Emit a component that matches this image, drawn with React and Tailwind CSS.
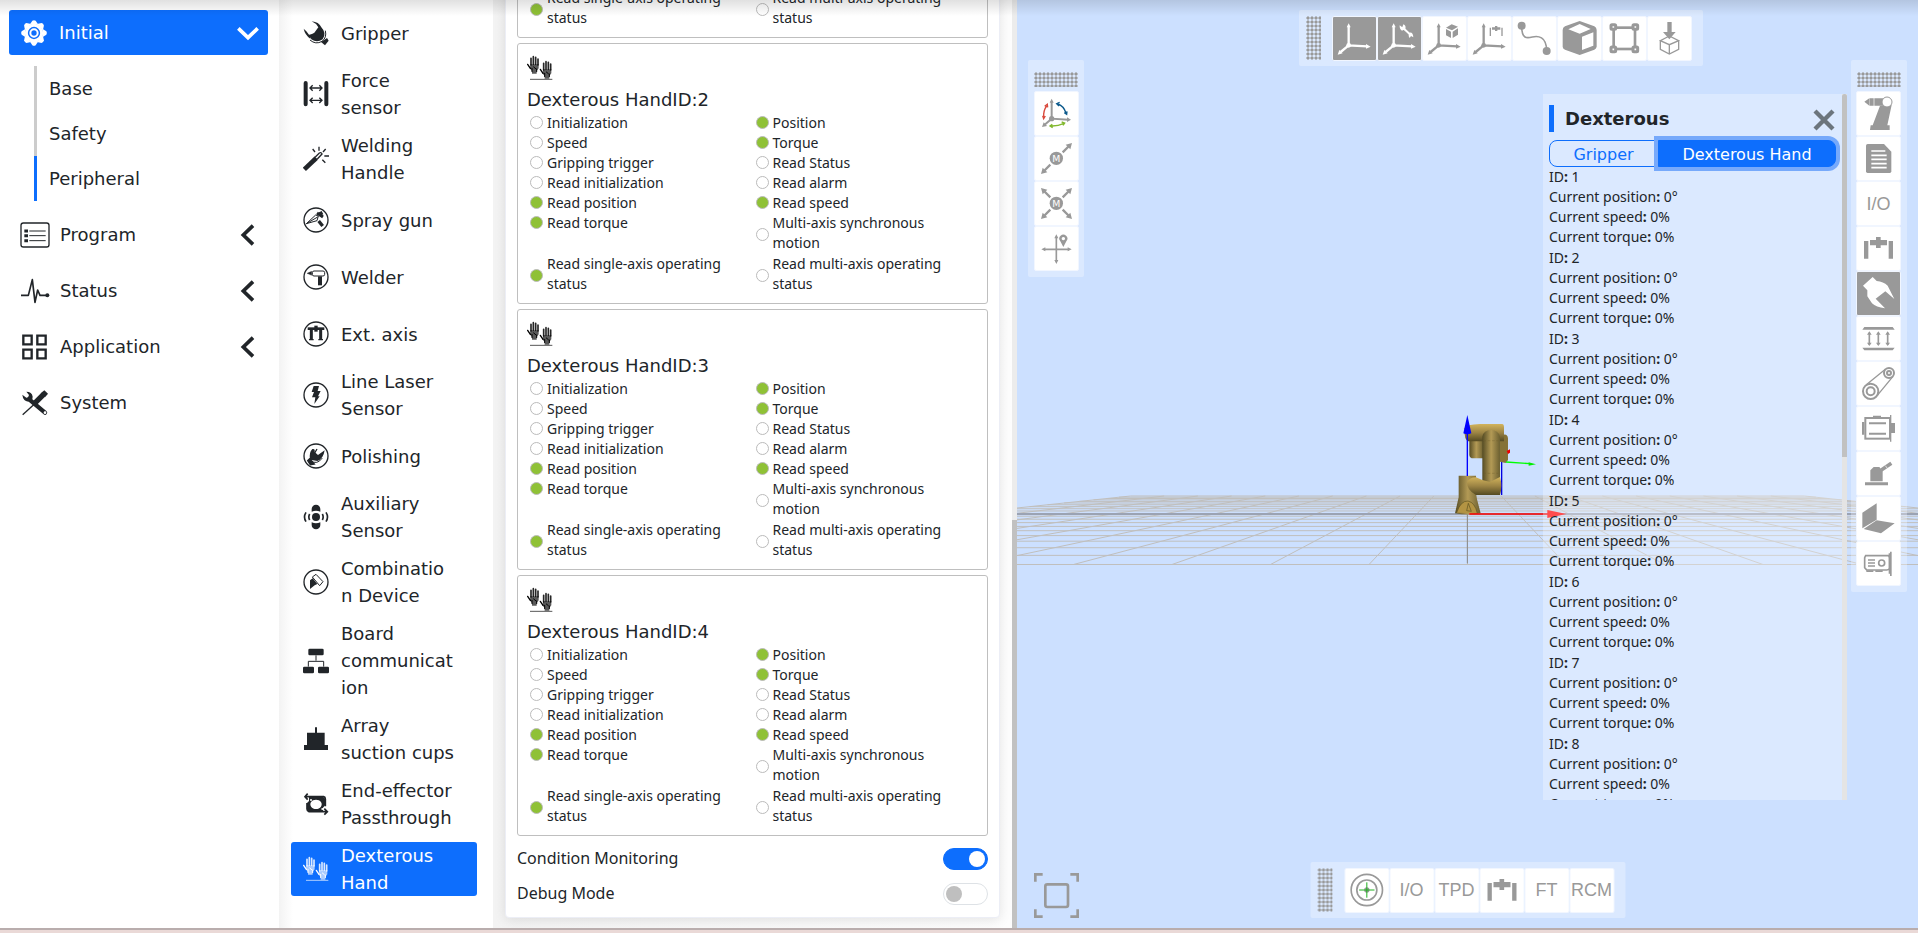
import { useState } from "react";
import clsx from "clsx";

const MENU = [
  { label: "Program", icon: ProgramIcon, children: true },
  { label: "Status", icon: StatusIcon, children: true },
  { label: "Application", icon: ApplicationIcon, children: true },
  { label: "System", icon: SystemIcon, children: false },
];

const SUB_MENU = ["Base", "Safety", "Peripheral"];

const PERIPHERALS = [
  { label: "Gripper", icon: <ClawShape /> },
  {
    label: "Force sensor",
    icon: (
      <g stroke="currentColor" fill="none">
        <path d="M8 6V70M70 6V70" strokeWidth="12" strokeLinecap="round" />
        <path d="M22 21H56M29 13l-8 8 8 8M49 13l8 8-8 8M22 58H56M29 50l-8 8 8 8M49 50l8 8-8 8" strokeWidth="4" />
      </g>
    ),
  },
  {
    label: "Welding Handle",
    icon: (
      <g stroke="currentColor" fill="none">
        <path d="M4 70L40 36" strokeWidth="14" />
        <path d="M37 33L49 21q6-3 8 3L43 39" strokeWidth="4" />
        <path d="M48 2V14M29 9l7 9M68 9l-8 9M64 30H78M58 41l9 9" strokeWidth="4" />
      </g>
    ),
  },
  {
    label: "Spray gun",
    icon: (
      <g stroke="currentColor" fill="none">
        <circle cx="39" cy="39" r="36" strokeWidth="4" />
        <path d="M10 50L38 24l8 3-4 14L10 50L44 30" strokeWidth="3" />
        <path d="M42 18l18 12M52 14l5 10" strokeWidth="9" />
        <path d="M47 42l12 15" strokeWidth="10" />
      </g>
    ),
  },
  {
    label: "Welder",
    icon: (
      <g stroke="currentColor" fill="none">
        <circle cx="39" cy="39" r="36" strokeWidth="4" />
        <rect x="28" y="21" width="37" height="15" rx="5" strokeWidth="3" />
        <path d="M12 28L26 22V34Z" fill="currentColor" />
        <path d="M51 37V64" strokeWidth="12" />
      </g>
    ),
  },
  {
    label: "Ext. axis",
    icon: (
      <g stroke="currentColor" fill="none">
        <circle cx="39" cy="39" r="36" strokeWidth="4" />
        <path d="M14 23H64" strokeWidth="8" />
        <path d="M39 14V32" strokeWidth="10" />
        <path d="M25 26V56M53 26V56" strokeWidth="9" />
        <path d="M18 56H32M46 56H60" strokeWidth="4" />
      </g>
    ),
  },
  {
    label: "Line Laser Sensor",
    icon: (
      <g>
        <circle cx="39" cy="39" r="36" stroke="currentColor" fill="none" strokeWidth="4" />
        <path d="M32 12H48L44 27H53L45 43H50L34 66L37 46H27L33 30H26Z" fill="currentColor" />
      </g>
    ),
  },
  {
    label: "Polishing",
    icon: (
      <g>
        <circle cx="39" cy="39" r="36" stroke="currentColor" fill="none" strokeWidth="4" />
        <path d="M28 18Q37 16 35 27L45 36L65 22Q61 48 43 54L21 50Q17 29 28 18Z" fill="currentColor" />
        <path d="M42 18L35 30M20 47L34 63L22 65L14 53Z" stroke="currentColor" strokeWidth="4" fill="currentColor" />
        <path d="M23 53Q42 67 58 45" stroke="currentColor" fill="none" strokeWidth="3" />
      </g>
    ),
  },
  {
    label: "Auxiliary Sensor",
    icon: (
      <g stroke="currentColor" fill="none" strokeWidth="5">
        <circle cx="39" cy="39" r="12" fill="currentColor" stroke="none" />
        <path d="M26 23V15a13 13 0 0 1 26 0V23Q39 17 26 23ZM26 55V63a13 13 0 0 0 26 0V55Q39 61 26 55Z" fill="currentColor" stroke="none" />
        <path d="M20 30q-5 9 0 18M9 25q-9 14 0 28M58 30q5 9 0 18M69 25q9 14 0 28" />
      </g>
    ),
  },
  {
    label: "Combination Device",
    icon: (
      <g>
        <circle cx="39" cy="39" r="36" stroke="currentColor" fill="none" strokeWidth="4" />
        <path d="M28 24L39 16L60 38L50 50Z" stroke="currentColor" fill="none" strokeWidth="3" />
        <path d="M21 60V34L29 28L43 45L35 49Z" fill="currentColor" />
      </g>
    ),
  },
  {
    label: "Board communication",
    icon: (
      <g fill="currentColor">
        <rect x="16" y="2" width="46" height="20" rx="4" />
        <rect x="0" y="56" width="33" height="20" rx="4" />
        <rect x="45" y="56" width="33" height="20" rx="4" />
        <path d="M39 22V38M16 56V40H62V56" stroke="currentColor" fill="none" strokeWidth="3" />
      </g>
    ),
  },
  { label: "Array suction cups", icon: <path d="M36 4H42V20H65V57H75V72H3V57H12V20H36Z" fill="currentColor" /> },
  {
    label: "End-effector Passthrough",
    icon: (
      <g fill="none" stroke="currentColor">
        <path d="M14 8L6 17L14 26M7 17H62Q67 18 67 24V46M64 53L73 62L64 71M72 62H18Q12 60 12 54V36" strokeWidth="5" />
        <path
          fillRule="evenodd"
          fill="currentColor"
          stroke="none"
          d="M18 17H60L67 24V42L60 50V62H18L12 56V36L18 30ZM39 26a17 14 0 1 0 .1 0Z"
        />
        <circle cx="24" cy="27" r="3" fill="#fff" stroke="none" />
        <circle cx="58" cy="54" r="3" fill="#fff" stroke="none" />
      </g>
    ),
  },
  { label: "Dexterous Hand", icon: <HandsShape /> },
];

const HAND_STATES = [
  ["Initialization", false],
  ["Position", true],
  ["Speed", false],
  ["Torque", true],
  ["Gripping trigger", false],
  ["Read Status", false],
  ["Read initialization", false],
  ["Read alarm", false],
  ["Read position", true],
  ["Read speed", true],
  ["Read torque", true],
  ["Multi-axis synchronous motion", false],
  ["Read single-axis operating status", true],
  ["Read multi-axis operating status", false],
];

const GRID_COLS = Array.from({ length: 21 }, (_, i) => i - 10);
const GRID_ROWS = Array.from({ length: 21 }, (_, i) => {
  const near = 1 / 98.5;
  const far = 1 / 33.7;
  const s = 1 / (near + (i / 20) * (far - near));
  return { y: 496 + ((s - 33.7) / 64.8) * 68.5, half: s * 10 };
});

function HandShape() {
  return (
    <g stroke="currentColor" fill="none" strokeLinecap="round">
      <path d="M12 30V10M19 28V5M26 28V7M33 30V12" strokeWidth="5" strokeOpacity="0.85" />
      <path d="M10 40L2 28" strokeWidth="4" />
      <path d="M10 28H35V40L29 48V56H15V48L9 41Z" fill="currentColor" fillOpacity="0.65" stroke="none" />
      <path d="M15 50V40M29 50V42M20 36L26 41" strokeWidth="3" />
    </g>
  );
}

function HandsShape() {
  return (
    <g>
      <HandShape />
      <g transform="translate(38 15)">
        <HandShape />
      </g>
      <path d="M9 73H76" stroke="currentColor" strokeWidth="2" />
    </g>
  );
}

function ClawShape() {
  return (
    <g fill="currentColor">
      <path d="M26 4Q48 6 55 22Q72 40 59 58Q42 70 25 58L20 46L34 38L46 22Q40 10 26 4Z" />
      <path d="M2 26L10 34L18 44L27 43L22 56Q6 45 2 26Z" />
      <path d="M54 66L72 54L77 62L66 76Z" />
      <path d="M21 60Q38 75 57 64Q72 53 67 32" stroke="currentColor" strokeWidth="3" fill="none" />
    </g>
  );
}

function GearIcon() {
  return (
    <svg viewBox="0 0 78 78" className="size-[26px] shrink-0" aria-hidden="true">
      <g fill="currentColor">
        {[0, 45, 90, 135, 180, 225, 270, 315].map((a) => (
          <path key={a} d="M26 14L34 2Q39 -1 44 2L52 14Z" transform={`rotate(${a} 39 39)`} />
        ))}
      </g>
      <circle cx="39" cy="39" r="23" fill="none" stroke="currentColor" strokeWidth="9" />
      <circle cx="39" cy="39" r="11" fill="none" stroke="currentColor" strokeWidth="6" />
    </svg>
  );
}

function ProgramIcon() {
  return (
    <svg viewBox="0 0 90 78" className="h-[26px] w-[30px] shrink-0" fill="none" stroke="currentColor" aria-hidden="true">
      <rect x="3" y="3" width="84" height="72" rx="7" strokeWidth="4" />
      <path d="M28 27H77M28 41H77M28 56H77" strokeWidth="3" />
      <path d="M13 27H24M13 41H24M13 56H24" strokeWidth="9" />
    </svg>
  );
}

function StatusIcon() {
  return (
    <svg viewBox="0 0 90 78" className="h-[26px] w-[30px] shrink-0" fill="none" stroke="currentColor" aria-hidden="true">
      <path d="M3 52H25L37 5L45 73L53 36L60 52H82" strokeWidth="5" strokeLinejoin="round" />
      <circle cx="82" cy="52" r="6" fill="currentColor" stroke="none" />
    </svg>
  );
}

function ApplicationIcon() {
  return (
    <svg viewBox="0 0 90 78" className="h-[26px] w-[30px] shrink-0" fill="none" stroke="currentColor" strokeWidth="7" aria-hidden="true">
      <path d="M10 5H35V31H10ZM52 5H77V31H52ZM10 47H35V73H10ZM52 47H77V73H52Z" />
    </svg>
  );
}

function SystemIcon() {
  return (
    <svg viewBox="0 0 90 78" className="h-[26px] w-[30px] shrink-0" fill="none" stroke="currentColor" aria-hidden="true">
      <path d="M8 74L46 40" strokeWidth="4" />
      <path d="M46 38L70 14" strokeWidth="16" />
      <path d="M62 10L73 1L84 11L75 22Z" fill="currentColor" stroke="none" />
      <path d="M32 32L75 68" strokeWidth="13" strokeLinecap="round" />
      <path d="M7 14Q9 33 25 35Q38 33 38 20Q36 5 19 5L27 15Q25 24 19 23Z" fill="currentColor" stroke="none" />
      <circle cx="75" cy="68" r="4" fill="#fff" stroke="none" />
    </svg>
  );
}

function Sidebar() {
  return (
    <nav className="flex w-[279px] shrink-0 flex-col gap-[11px] bg-white pt-[10px] pr-[11px] pl-[9px]">
      <button className="flex h-[45px] items-center gap-[12px] rounded-[3px] bg-[#0d6efd] pr-[9px] pl-[12px] text-left text-white">
        <GearIcon />
        <span className="flex-1">Initial</span>
        <svg viewBox="0 0 66 60" className="h-5 w-[22px]" fill="none" stroke="currentColor" strokeWidth="11" aria-hidden="true">
          <path d="M4 16L33 44L62 16" />
        </svg>
      </button>
      <ul className="ml-[25px]">
        {SUB_MENU.map((label) => (
          <li key={label}>
            <button
              className={clsx(
                "flex h-[45px] w-full items-center border-l-[3px] pl-[12px]",
                label === "Peripheral" ? "border-[#0d6efd]" : "border-[#ccc]"
              )}
            >
              {label}
            </button>
          </li>
        ))}
      </ul>
      {MENU.map(({ label, icon: Icon, children }) => (
        <button key={label} className="flex h-[45px] items-center gap-[10px] pr-[12px] pl-[11px] text-left">
          <Icon />
          <span className="flex-1">{label}</span>
          {children && (
            <svg viewBox="0 0 54 66" className="h-[22px] w-[18px]" fill="none" stroke="currentColor" strokeWidth="11" aria-hidden="true">
              <path d="M45 5L16 33L45 61" />
            </svg>
          )}
        </button>
      ))}
    </nav>
  );
}

function PeripheralNav() {
  return (
    <nav className="flex w-[214px] shrink-0 flex-col gap-[11px] bg-linear-to-r from-[#f3f3f3] to-white to-[14px] pt-[10px] pr-[16px] pl-[12px]">
      {PERIPHERALS.map(({ label, icon }) => (
        <button
          key={label}
          className={clsx(
            "flex min-h-[46px] items-center gap-[12px] rounded-[3px] pl-[12px] text-left",
            label === "Dexterous Hand" && "bg-[#0d6efd] text-white"
          )}
        >
          <svg viewBox="0 0 78 78" className="size-[26px] shrink-0" aria-hidden="true">
            {icon}
          </svg>
          <span className="w-[114px] wrap-break-word">{label}</span>
        </button>
      ))}
    </nav>
  );
}

function HandCard({ id }) {
  return (
    <section className="h-[261px] shrink-0 rounded-[3px] border border-[#bfbfbf] px-[9px] pt-[11px]">
      <svg viewBox="0 0 78 78" className="mb-[5px] size-[26px] text-black" aria-hidden="true">
        <HandsShape />
      </svg>
      <h3 className="leading-[27px]">Dexterous HandID:{id}</h3>
      <ul className="grid grid-cols-2 text-[14px] leading-[20px] [font-family:'Noto_Sans',sans-serif]">
        {HAND_STATES.map(([label, on]) => (
          <li key={label} className={clsx("flex gap-[4px] pr-4 pl-[3px]", label.length > 25 && "pb-px")}>
            <span
              className={clsx(
                "mt-[3px] size-[13px] shrink-0 rounded-full border border-[#bbb]",
                label.length > 25 && "self-center",
                on && "bg-[#8fc136]"
              )}
            />
            <span>{label}</span>
          </li>
        ))}
      </ul>
    </section>
  );
}

function SwitchRow({ label, checked, onChange }) {
  return (
    <label className="flex h-[35px] shrink-0 items-center justify-between text-[16px] [font-family:'Noto_Sans',sans-serif]">
      {label}
      <input
        type="checkbox"
        role="switch"
        checked={checked}
        onChange={(e) => onChange(e.target.checked)}
        className="flex h-[22px] w-[45px] appearance-none items-center rounded-full border border-[#dee2e6] bg-white px-[2px] before:size-[16px] before:rounded-full before:bg-[#bfbfbf] checked:justify-end checked:border-[#0d6efd] checked:bg-[#0d6efd] checked:before:bg-white"
      />
    </label>
  );
}

function HandSettings() {
  const [monitoring, setMonitoring] = useState(true);
  const [debug, setDebug] = useState(false);

  return (
    <main className="flex w-[524px] shrink-0 bg-[#fafafa]">
      <div className="flex min-w-0 flex-1 flex-col justify-end overflow-hidden bg-linear-to-r from-[#f3f3f3] to-[#fdfdfd] pr-[12px] pb-[10px] pl-[12px]">
        <div className="flex shrink-0 flex-col gap-[5px] rounded-[4px] border border-[#eceef6] bg-white px-[11px] pb-[6px] shadow-[0_2px_12px_rgba(0,0,0,0.1)]">
          {[1, 2, 3, 4].map((id) => (
            <HandCard key={id} id={id} />
          ))}
          <div>
            <SwitchRow label="Condition Monitoring" checked={monitoring} onChange={setMonitoring} />
            <SwitchRow label="Debug Mode" checked={debug} onChange={setDebug} />
          </div>
        </div>
      </div>
      <div className="flex w-[5px] flex-col justify-end bg-[#ececec]">
        <div className="h-[44%] bg-[#c1c1c1]" />
      </div>
    </main>
  );
}

function Scene() {
  return (
    <svg viewBox="0 0 901 928" preserveAspectRatio="xMidYMid slice" className="absolute inset-0 size-full" aria-hidden="true">
      <defs>
        <linearGradient id="gold-x" x1="0" x2="1" y1="0" y2="0">
          <stop offset="0" stopColor="#554c24" />
          <stop offset="0.5" stopColor="#b39a55" />
          <stop offset="1" stopColor="#6b5f30" />
        </linearGradient>
        <linearGradient id="gold-y" x1="0" x2="0" y1="0" y2="1">
          <stop offset="0" stopColor="#d2b35c" />
          <stop offset="0.5" stopColor="#9c8444" />
          <stop offset="1" stopColor="#544a22" />
        </linearGradient>
      </defs>
      <g stroke="#c0bfbd" strokeWidth="1">
        {GRID_COLS.map((k) => (
          <line key={k} x1={450.5 + 98.5 * k} y1="564.5" x2={450.5 + 33.7 * k} y2="496" />
        ))}
        {GRID_ROWS.map(({ y, half }) => (
          <line key={y} x1={450.5 - half} y1={y} x2={450.5 + half} y2={y} />
        ))}
      </g>
      <path d="M0 514H901" stroke="#9ba3b3" strokeWidth="2" />
      <g transform="translate(403 380) scale(0.3333)">
        <path d="M142 402V550" stroke="#888" strokeWidth="3" />
        <path d="M245 240V345" stroke="#0000e0" strokeWidth="4" />
        <path d="M248 165Q262 160 264 175V240L257 249L240 245V170Z" fill="#857236" />
        <path d="M148 170H190V235H155Q147 232 148 220Z" fill="url(#gold-x)" />
        <path d="M133 145Q138 133 180 132H247Q252 132 252 140V184H145Q133 182 133 145Z" fill="url(#gold-y)" />
        <path d="M187 170Q191 150 213 150T240 170V310H187Z" fill="url(#gold-x)" />
        <path d="M190 182H235M190 280H235" stroke="#6b5a2a" strokeWidth="1" strokeDasharray="8 5" />
        <path d="M116 287H168V340L171 358L182 400Q145 407 105 400L116 352Z" fill="url(#gold-x)" />
        <path d="M141 308Q148 292 168 292L187 300L210 306L240 291Q248 318 240 345H168Q141 330 141 308Z" fill="url(#gold-y)" />
        <path d="M110 398Q122 362 144 363Q165 368 172 400M140 392L145 370L154 394Z" fill="#b39443" stroke="#5c5120" strokeWidth="2" />
        <path d="M142 288V150" stroke="#00f" strokeWidth="4" />
        <path d="M130 160L142 105L154 160Q142 166 130 160Z" fill="#00f" />
        <path d="M260 213l10-5v10l-6 4Z" fill="#e00" />
        <path d="M258 246L330 251" stroke="#0f0" strokeWidth="4" />
        <path d="M326 247L348 253L326 257Z" fill="#0e0" />
        <path d="M148 402H385" stroke="red" strokeWidth="5" />
        <path d="M382 390L440 402L382 414Z" fill="red" />
      </g>
    </svg>
  );
}

function Axes() {
  return (
    <g stroke="currentColor" fill="currentColor">
      <path d="M50 32V88L106 91M50 88L26 108" strokeWidth="7" fill="none" />
      <path d="M50 22L56 34H44ZM116 92L102 84V98ZM17 116L22 102L32 112Z" stroke="none" />
      <circle cx="50" cy="88" r="7" stroke="none" />
    </g>
  );
}

function GantryShape() {
  return <path d="M24 45H37V98H24ZM98 45H111V98H98ZM42 42H60V33H74V42H93V58H74V66H60V58H42Z" fill="currentColor" />;
}

function ToolButton({ label, active, children, text }) {
  return (
    <button
      aria-label={label}
      className={clsx(
        "flex size-[45px] shrink-0 items-center justify-center overflow-hidden rounded-[2px] border border-[#f1f6ff]",
        active ? "bg-[#999] text-white" : "bg-white text-[#999]"
      )}
    >
      {text ? (
        <span className="text-[18px] leading-none [font-family:'Liberation_Sans',sans-serif]">{text}</span>
      ) : (
        <svg viewBox="0 0 135 135" className="size-[45px] shrink-0" aria-hidden="true">
          {children}
        </svg>
      )}
    </button>
  );
}

function Grip({ vertical }) {
  return (
    <span
      className={clsx(
        "shrink-0 bg-[radial-gradient(circle,#999_50%,transparent_62%)] bg-[size:4px_4px]",
        vertical ? "h-[44px] w-[15px]" : "h-[15px] w-[44px]"
      )}
    />
  );
}

function TopToolbar() {
  return (
    <div className="absolute top-[10px] right-[215px] flex h-[56px] items-center gap-[11px] rounded-[2px] bg-white/30 pr-[11px] pl-[7px]">
      <Grip vertical />
      <div className="flex">
        <ToolButton label="Base coordinate system" active>
          <Axes />
        </ToolButton>
        <ToolButton label="Tool coordinate system" active>
          <Axes />
          <path d="M76 34L102 58" stroke="currentColor" strokeWidth="6" />
          <path d="M68 28l8 6 3-9q9 3 6 14l-10 5q-8-4-7-16ZM98 50q10-2 11 14l-7-4-4 6q-6-8 0-16Z" fill="currentColor" />
        </ToolButton>
        <ToolButton label="Workpiece coordinate system">
          <Axes />
          <path d="M72 35L89 25L108 32L90 43ZM72 39L87 47V66L72 58ZM92 47L108 37V56L92 66Z" fill="currentColor" />
        </ToolButton>
        <ToolButton label="External axis coordinate system">
          <Axes />
          <path d="M70 35V60M105 35V60" stroke="currentColor" strokeWidth="4" />
          <path d="M75 34H84V30H91V34H100V41H91V45H84V41H75Z" fill="currentColor" />
        </ToolButton>
        <ToolButton label="Trajectory">
          <path d="M29 29C29 70 45 67 61 63S104 60 104 105" stroke="currentColor" strokeWidth="5" fill="none" />
          <circle cx="29" cy="29" r="12" fill="currentColor" />
          <circle cx="104" cy="105" r="12" fill="currentColor" />
        </ToolButton>
        <ToolButton label="Model">
          <path
            fillRule="evenodd"
            fill="currentColor"
            d="M68 15L112 31Q119 35 119 42V92Q118 98 112 101L68 117L24 101Q17 98 17 92V42Q17 35 24 31ZM68 24L34 40L68 53L101 39ZM75 62V102L109 89V49Z"
          />
        </ToolButton>
        <ToolButton label="Safety area">
          <rect x="35" y="35" width="64" height="64" fill="none" stroke="currentColor" strokeWidth="8" />
          <g fill="#fff" stroke="currentColor" strokeWidth="9">
            <rect x="27" y="26" width="14" height="14" rx="3" />
            <rect x="93" y="26" width="14" height="14" rx="3" />
            <rect x="27" y="93" width="14" height="14" rx="3" />
            <rect x="93" y="93" width="14" height="14" rx="3" />
          </g>
        </ToolButton>
        <ToolButton label="Import">
          <path d="M67 60L40 74L67 86L95 74ZM40 74V100L67 114L95 100V74M67 86V114" fill="none" stroke="currentColor" strokeWidth="4" />
          <path d="M61 18H74V48H86L67 70L48 48H61Z" fill="currentColor" />
        </ToolButton>
      </div>
    </div>
  );
}

function LeftToolbar() {
  return (
    <div className="absolute top-[60px] left-[11px] flex w-[56px] flex-col items-center gap-[4px] rounded-[2px] bg-white/30 pt-[12px] pb-[6px]">
      <Grip />
      <div>
        <ToolButton label="Jog rotation">
          <path d="M53 30V83L103 86M53 83L31 102" stroke="currentColor" strokeWidth="6" fill="none" />
          <path d="M53 23L59 35H47ZM111 86L99 79V93ZM24 108L29 94L39 105Z" fill="currentColor" />
          <circle cx="53" cy="83" r="8" fill="currentColor" />
          <path d="M29 78Q28 58 38 45M26 74l3 9 5-8M32 46l8-6 1 9" stroke="#d94a3d" strokeWidth="4" fill="none" />
          <path d="M72 39Q89 45 96 66M77 34l-9 4 7 7M91 65l7 5 1-9" stroke="#0d5a8c" strokeWidth="4" fill="none" />
          <path d="M50 105Q72 106 88 98M55 100l-7 5 8 5M83 93l9 3-5 7" stroke="#82b82f" strokeWidth="4" fill="none" />
        </ToolButton>
        <ToolButton label="Linear move">
          <path d="M86 49L105 30M49 86L30 105" stroke="currentColor" strokeWidth="7" />
          <path d="M114 21L109 40L95 26ZM21 114L26 95L40 109Z" fill="currentColor" />
          <circle cx="67" cy="67" r="20" fill="currentColor" />
          <text x="67" y="77" fill="#fff" fontSize="28" textAnchor="middle">M</text>
        </ToolButton>
        <ToolButton label="Multi-direction move">
          <path d="M86 49L105 30M49 86L30 105M49 49L30 30M86 86L105 105" stroke="currentColor" strokeWidth="7" />
          <path d="M114 21L109 40L95 26ZM21 114L26 95L40 109ZM21 21L40 26L26 40ZM114 114L95 109L109 95Z" fill="currentColor" />
          <circle cx="67" cy="67" r="20" fill="currentColor" />
          <text x="67" y="77" fill="#fff" fontSize="28" textAnchor="middle">M</text>
        </ToolButton>
        <ToolButton label="Move to point">
          <path d="M67 32V106M30 70H105" stroke="currentColor" strokeWidth="5" />
          <path d="M67 25L73 37H61ZM67 114L61 102H73ZM22 70L34 64V76ZM113 70L101 64V76Z" fill="currentColor" />
          <path fillRule="evenodd" fill="currentColor" d="M88 63L79 46A12 12 0 1 1 97 46ZM88 33a5 5 0 1 0 .1 0Z" />
        </ToolButton>
      </div>
    </div>
  );
}

function RightToolbar() {
  return (
    <div className="absolute top-[60px] right-[11px] flex w-[56px] flex-col items-center gap-[4px] rounded-[2px] bg-white/30 pt-[12px] pr-px pb-[6px]">
      <Grip />
      <div>
        <ToolButton label="Robot">
          <path d="M25 32L40 22V44ZM41 22H53V44H41ZM55 22H84V44H55Z" fill="currentColor" />
          <path d="M72 44L107 42L94 103H101V117H42L44 103H50Z" fill="currentColor" />
          <circle cx="93" cy="33" r="15" fill="#fff" stroke="currentColor" strokeWidth="3" />
        </ToolButton>
        <ToolButton label="Log">
          <path d="M35 24H84L106 47V106Q106 111 101 111H35Q30 111 30 106V29Q30 24 35 24Z" fill="currentColor" />
          <path d="M46 45H88M46 58H92M46 70H92M46 83H92M46 95H92" stroke="#fff" strokeWidth="5" />
        </ToolButton>
        <ToolButton label="IO panel" text="I/O" />
        <ToolButton label="External axis">
          <GantryShape />
        </ToolButton>
        <ToolButton label="End effector" active>
          <path d="M50 18L62 30Q82 32 95 44L115 84L88 61L59 83L87 112Q60 109 48 97L34 76L34 58L21 44Z" fill="currentColor" />
        </ToolButton>
        <ToolButton label="Force">
          <path d="M25 33H110L116 41H19ZM19 95H116L110 103H25Z" fill="currentColor" />
          <path d="M40 50V86M67 50V86M95 50V86" stroke="currentColor" strokeWidth="5" />
          <path d="M40 46l7 10H33ZM67 46l7 10H60ZM95 46l7 10H88ZM40 90l-7-10H47ZM67 90l-7-10H74ZM95 90l-7-10h14Z" fill="currentColor" />
        </ToolButton>
        <ToolButton label="Conveyor">
          <g fill="none" stroke="currentColor" strokeWidth="6">
            <circle cx="44" cy="91" r="23" />
            <circle cx="44" cy="91" r="12" />
            <circle cx="99" cy="36" r="15" />
            <circle cx="99" cy="36" r="6" />
            <path d="M30 72L88 25M64 103L111 46" strokeWidth="4" />
          </g>
        </ToolButton>
        <ToolButton label="Motor">
          <rect x="28" y="36" width="74" height="62" fill="none" stroke="currentColor" strokeWidth="6" />
          <path d="M51 29H75V36H51ZM18 48H25V86H18ZM105 51H117V81H105Z" fill="currentColor" />
          <path d="M104 27V107" stroke="currentColor" strokeWidth="4" />
          <path d="M39 52H90M39 83H90" stroke="currentColor" strokeWidth="6" />
        </ToolButton>
        <ToolButton label="Polishing">
          <path d="M27 94H96V103H27ZM43 91V58L53 48H70L80 60V91Z" fill="currentColor" />
          <path d="M76 57L106 37" stroke="currentColor" strokeWidth="11" />
          <path d="M88 44l6 8" stroke="#fff" strokeWidth="2" />
        </ToolButton>
        <ToolButton label="Workbench">
          <path d="M19 50L62 22V71L19 97ZM62 73L116 82L75 112L23 99Z" fill="currentColor" />
        </ToolButton>
        <ToolButton label="Camera">
          <path d="M29 44H98Q98 44 101 50V82Q98 87 92 87H32L26 80V50Z" fill="none" stroke="currentColor" strokeWidth="5" />
          <path d="M98 37H102V32H107V105H102V98H98ZM31 88H52V93H31ZM58 88H80V93H58Z" fill="currentColor" />
          <path d="M36 57H57M36 66H57M36 75H57" stroke="currentColor" strokeWidth="5" />
          <circle cx="77" cy="66" r="9" fill="none" stroke="currentColor" strokeWidth="5" />
        </ToolButton>
      </div>
    </div>
  );
}

function BottomToolbar() {
  return (
    <div className="absolute bottom-[10px] left-1/2 flex h-[56px] -translate-x-1/2 items-center gap-[12px] rounded-[2px] bg-white/30 pr-[11px] pl-[7px]">
      <Grip vertical />
      <div className="flex">
        <ToolButton label="Target">
          <circle cx="67" cy="66" r="47" fill="none" stroke="currentColor" strokeWidth="5" />
          <circle cx="67" cy="66" r="30" fill="none" stroke="currentColor" strokeWidth="5" />
          <circle cx="67" cy="66" r="8" fill="currentColor" />
          <path d="M67 43V89M44 66H90" stroke="#1fb01f" strokeWidth="3" />
        </ToolButton>
        <ToolButton label="IO" text="I/O" />
        <ToolButton label="TPD" text="TPD" />
        <ToolButton label="External axis jog">
          <GantryShape />
        </ToolButton>
        <ToolButton label="FT" text="FT" />
        <ToolButton label="RCM" text="RCM" />
      </div>
    </div>
  );
}

function Reading({ name, value }) {
  return (
    <p>
      {name}
      <b>:</b> {value}
    </p>
  );
}

function DexterousPanel() {
  const [tab, setTab] = useState("Dexterous Hand");

  return (
    <aside className="absolute top-[94px] right-[71px] flex h-[706px] w-[304px] overflow-hidden bg-white/30">
      <div className="min-w-0 flex-1 pt-[11px] pl-[6px]">
        <header className="flex h-[27px] items-center justify-between border-l-[5px] border-[#0d6efd] pr-[7px] pl-[11px]">
          <h2 className="font-bold">Dexterous</h2>
          <button aria-label="Close" className="mt-[2px] text-[#6c757d]">
            <svg viewBox="0 0 66 66" className="size-[22px]" stroke="currentColor" strokeWidth="13" aria-hidden="true">
              <path d="M6 6L60 60M60 6L6 60" />
            </svg>
          </button>
        </header>
        <div className="mt-[8px] mr-[6px] flex h-[27px] text-[16px] leading-none">
          {["Gripper", "Dexterous Hand"].map((name) => (
            <button
              key={name}
              onClick={() => setTab(name)}
              className={clsx(
                "border border-[#0d6efd] pt-[3px] first:w-[109px] first:rounded-l-[8px] last:flex-1 last:rounded-r-[8px]",
                tab === name ? "bg-[#0d6efd] text-white shadow-[0_0_0_4px_#76a9fb]" : "text-[#0d6efd]"
              )}
            >
              {name}
            </button>
          ))}
        </div>
        <div className="text-[14px] leading-[20px] [font-family:'Noto_Sans',sans-serif]">
          {[1, 2, 3, 4, 5, 6, 7, 8].map((id) => (
            <div key={id} className="pb-px">
              <Reading name="ID" value={id} />
              <Reading name="Current position" value="0°" />
              <Reading name="Current speed" value="0%" />
              <Reading name="Current torque" value="0%" />
            </div>
          ))}
        </div>
      </div>
      <div className="w-[5px] bg-[#e4e4e4]">
        <div className="h-[363px] rounded-t-full bg-[#c1c1c1]" />
      </div>
    </aside>
  );
}

export default function App() {
  return (
    <div className="relative flex h-screen flex-col overflow-hidden bg-white text-[18px] leading-[27px] text-[#212529] [font-family:'DejaVu_Sans',Verdana,sans-serif]">
      <div className="flex min-h-0 flex-1">
        <Sidebar />
        <PeripheralNav />
        <HandSettings />
        <div className="relative min-w-0 flex-1 overflow-hidden bg-[#cce0ff]">
          <Scene />
          <TopToolbar />
          <LeftToolbar />
          <RightToolbar />
          <DexterousPanel />
          <BottomToolbar />
          <button aria-label="Fit view" className="absolute bottom-[10px] left-[17px] text-[#999]">
            <svg viewBox="0 0 135 135" className="size-[45px]" fill="none" stroke="currentColor" strokeWidth="8" aria-hidden="true">
              <path d="M4 26V4H26M109 4H131V26M131 109V131H109M26 131H4V109" />
              <rect x="34" y="34" width="68" height="68" rx="6" />
            </svg>
          </button>
        </div>
      </div>
      <footer className="h-[5px] shrink-0 border-t-2 border-[#b9adad] bg-[#ead9d7]" />
      <div className="pointer-events-none absolute inset-x-0 top-0 h-[16px] bg-linear-to-b from-black/12 to-transparent" />
    </div>
  );
}
